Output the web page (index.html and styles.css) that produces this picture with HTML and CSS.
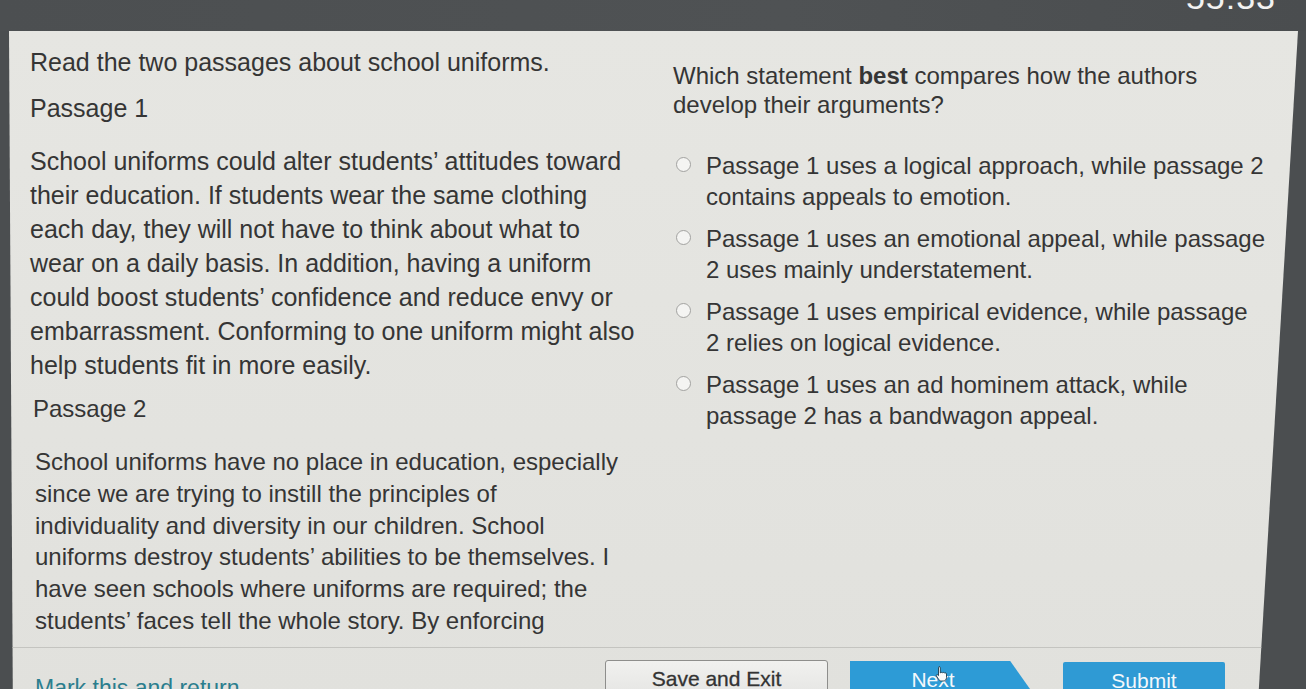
FILE: index.html
```html
<!DOCTYPE html>
<html>
<head>
<meta charset="utf-8">
<link rel="stylesheet" href="styles.css">
</head>
<body>
<div class="screen">
  <header class="topbar"><span class="timer">55:33</span></header>
  <main class="panel">
    <div class="columns">
      <section class="passages">
        <p class="intro">Read the two passages about school uniforms.</p>
        <h2 class="ptitle">Passage 1</h2>
        <p class="ptext">School uniforms could alter students’ attitudes toward<br>their education. If students wear the same clothing<br>each day, they will not have to think about what to<br>wear on a daily basis. In addition, having a uniform<br>could boost students’ confidence and reduce envy or<br>embarrassment. Conforming to one uniform might also<br>help students fit in more easily.</p>
        <h2 class="ptitle p2">Passage 2</h2>
        <p class="ptext t2">School uniforms have no place in education, especially<br>since we are trying to instill the principles of<br>individuality and diversity in our children. School<br>uniforms destroy students’ abilities to be themselves. I<br>have seen schools where uniforms are required; the<br>students’ faces tell the whole story. By enforcing</p>
      </section>
      <section class="question">
        <p class="qtext">Which statement <b>best</b> compares how the authors<br>develop their arguments?</p>
        <ul class="options">
          <li><span class="radio"></span><span>Passage 1 uses a logical approach, while passage 2<br>contains appeals to emotion.</span></li>
          <li><span class="radio"></span><span>Passage 1 uses an emotional appeal, while passage<br>2 uses mainly understatement.</span></li>
          <li><span class="radio"></span><span>Passage 1 uses empirical evidence, while passage<br>2 relies on logical evidence.</span></li>
          <li><span class="radio"></span><span>Passage 1 uses an ad hominem attack, while<br>passage 2 has a bandwagon appeal.</span></li>
        </ul>
      </section>
    </div>
    <footer class="bottombar">
      <a class="mark">Mark this and return</a>
      <div class="buttons">
        <button class="btn save">Save and Exit</button>
        <button class="btn next"><span class="nextlabel">Next<svg class="cursor" width="14" height="18" viewBox="0 0 14 18"><path d="M4 1.5c.8 0 1.3.6 1.3 1.3V8l.4-.1c.3-.7 1.6-.8 2 0 .4-.6 1.6-.6 2 .2.5-.4 1.8-.2 1.8.9v3.6c0 2-1.3 3.4-3.3 3.4H6.3c-1.2 0-2-.6-2.6-1.6L1.4 11c-.5-.9.4-1.7 1.2-1.2l.9.8V2.8c0-.7.5-1.3.5-1.3z" fill="#fafafa" stroke="#1c3a4a" stroke-width=".9"/></svg></span></button>
        <button class="btn submit">Submit</button>
      </div>
    </footer>
  </main>
</div>
</body>
</html>
```
FILE: styles.css
```css
html, body {
  margin: 0;
  padding: 0;
  width: 1306px;
  height: 689px;
  overflow: hidden;
  background: #4b4e50;
}
.screen {
  display: flex;
  flex-direction: column;
  height: 689px;
  font-family: "Liberation Sans", Arial, sans-serif;
}
.topbar {
  height: 31px;
  flex: none;
  display: flex;
  justify-content: flex-end;
  overflow: hidden;
  background: linear-gradient(90deg, #4c4f51, #4f5254 60%, #4a4d4f);
}
.timer {
  color: #f2f2f2;
  font-size: 34px;
  line-height: 34px;
  margin-top: -20px;
  margin-right: 30px;
  letter-spacing: 1px;
}
.panel {
  flex: 1;
  margin-left: 9px;
  margin-right: 8px;
  background: linear-gradient(180deg, #e6e6e2, #e1e1dd);
  clip-path: polygon(0 0, 100% 0, 96.9% 100%, 0.3% 100%);
  display: flex;
  flex-direction: column;
  color: #353535;
}
.columns {
  display: flex;
  height: 616px;
  border-bottom: 1px solid #c4c4c0;
  flex: none;
}
.passages {
  width: 643px;
  flex: none;
  padding-left: 21px;
  font-size: 25px;
}
.intro {
  margin: 16px 0 0;
  line-height: 30px;
}
.ptitle {
  margin: 16px 0 0;
  font-size: 25px;
  font-weight: normal;
  line-height: 30px;
}
.ptext {
  margin: 21px 0 0;
  line-height: 34px;
}
.ptitle.p2 { margin-top: 12px; padding-left: 3px; font-size: 24px; }
.ptext.t2 { margin-top: 22px; line-height: 31.8px; padding-left: 5px; font-size: 24px; }
.question {
  font-size: 24px;
}
.qtext {
  margin: 30px 0 0;
  line-height: 29px;
}
.qtext b { font-weight: bold; }
.options {
  list-style: none;
  margin: 31px 0 0;
  padding: 0 0 0 3px;
  display: flex;
  flex-direction: column;
  gap: 11px;
}
.options li {
  display: flex;
  gap: 15px;
  line-height: 31px;
}
.radio {
  flex: none;
  width: 13px;
  height: 13px;
  margin-top: 7px;
  border: 1.5px solid #a2a2a0;
  border-radius: 50%;
  background: #f4f4f2;
}
.bottombar {
  display: flex;
  align-items: flex-start;
  padding-left: 26px;
}
.mark {
  color: #2b7e8e;
  font-size: 23px;
  margin-top: 27px;
  width: 570px;
  flex: none;
}
.buttons {
  display: flex;
  gap: 22px;
  margin-top: 12px;
}
.btn {
  font-family: "Liberation Sans", Arial, sans-serif;
  font-size: 21px;
  height: 40px;
  border: none;
  padding: 0 0 2px;
  cursor: pointer;
}
.save {
  width: 223px;
  background: linear-gradient(180deg, #f1f1ef, #e4e4e2);
  border: 1px solid #8e8e8c;
  border-radius: 3px;
  color: #333;
  -webkit-text-stroke: 0.3px #333;
}
.next {
  width: 180px;
  margin-top: 1px;
  padding-right: 14px;
  background: #2d9bd6;
  color: #f4f8fb;
  clip-path: polygon(0 0, 89% 0, 100% 70%, 100% 100%, 0 100%);
}
.nextlabel {
  position: relative;
}
.cursor {
  position: absolute;
  left: 24px;
  top: -3px;
}
.submit {
  width: 162px;
  margin-top: 2px;
  margin-left: 11px;
  background: #2f9ad4;
  color: #f4f8fb;
  border-radius: 2px;
}
```
